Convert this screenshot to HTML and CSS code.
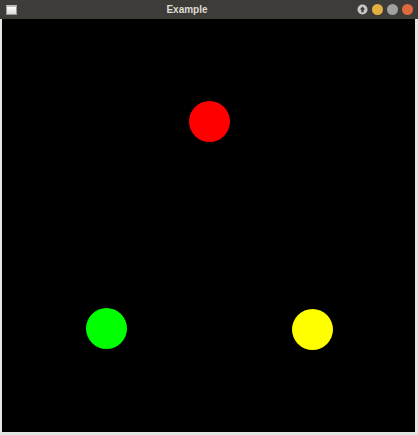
FILE: index.html
```html
<!DOCTYPE html>
<html>
<head>
<meta charset="utf-8">
<link rel="stylesheet" href="styles.css">
</head>
<body>
<div class="window">
  <div class="titlebar">
    <div class="appicon"></div>
    <div class="title">Example</div>
    <div class="buttons">
      <span class="btn btn-up"><svg width="11" height="11" viewBox="0 0 11 11"><circle cx="5.5" cy="5.5" r="5" fill="#c8c8c4"/><path d="M5.5 2.6 L8.2 5.5 H6.6 V8.3 H4.4 V5.5 H2.8 Z" fill="#3c3b37"/></svg></span>
      <span class="btn btn-min"></span>
      <span class="btn btn-max"></span>
      <span class="btn btn-close"></span>
    </div>
  </div>
  <div class="body">
    <div class="canvas">
      <div class="dot red"></div>
      <div class="dot green"></div>
      <div class="dot yellow"></div>
    </div>
  </div>
</div>
</body>
</html>
```
FILE: styles.css
```css
html, body {
  margin: 0;
  padding: 0;
  background: #e4e6e6;
}
.window {
  width: 418px;
  height: 435px;
  display: flex;
  flex-direction: column;
  box-sizing: border-box;
}
.titlebar {
  height: 19px;
  background: #3d3c38;
  display: flex;
  align-items: center;
  position: relative;
  flex: none;
}
.appicon {
  width: 9px;
  height: 7px;
  margin-left: 6px;
  border: 1px solid #9a9a98;
  background: linear-gradient(#ffffff, #d8d8d8);
  border-top: 2px solid #bdbdbd;
}
.title {
  position: absolute;
  left: 0;
  right: 0;
  top: 0;
  line-height: 19px;
  text-align: center;
  font-family: "Liberation Sans", Arial, sans-serif;
  font-weight: bold;
  font-size: 10px;
  color: #dfdbd2;
  margin-left: -44px;
}
.buttons {
  margin-left: auto;
  margin-right: 5px;
  display: flex;
  gap: 4px;
  align-items: center;
}
.btn {
  display: block;
  width: 11px;
  height: 11px;
  border-radius: 50%;
}
.btn-up { background: transparent; }
.btn-up svg { display: block; }
.btn-min { background: #e2b03f; }
.btn-max { background: #a1a19d; }
.btn-close { background: #e0693e; }
.body {
  flex: 1;
  padding: 0 3px 3px 2px;
  background: #e4e6e6;
  display: flex;
}
.canvas {
  flex: 1;
  background: #000;
  position: relative;
}
.dot {
  position: absolute;
  width: 41px;
  height: 41px;
  border-radius: 50%;
}
.red { background: #ff0000; left: 187px; top: 82px; }
.green { background: #00ff00; left: 84px; top: 289px; }
.yellow { background: #ffff00; left: 290px; top: 290px; }
```
